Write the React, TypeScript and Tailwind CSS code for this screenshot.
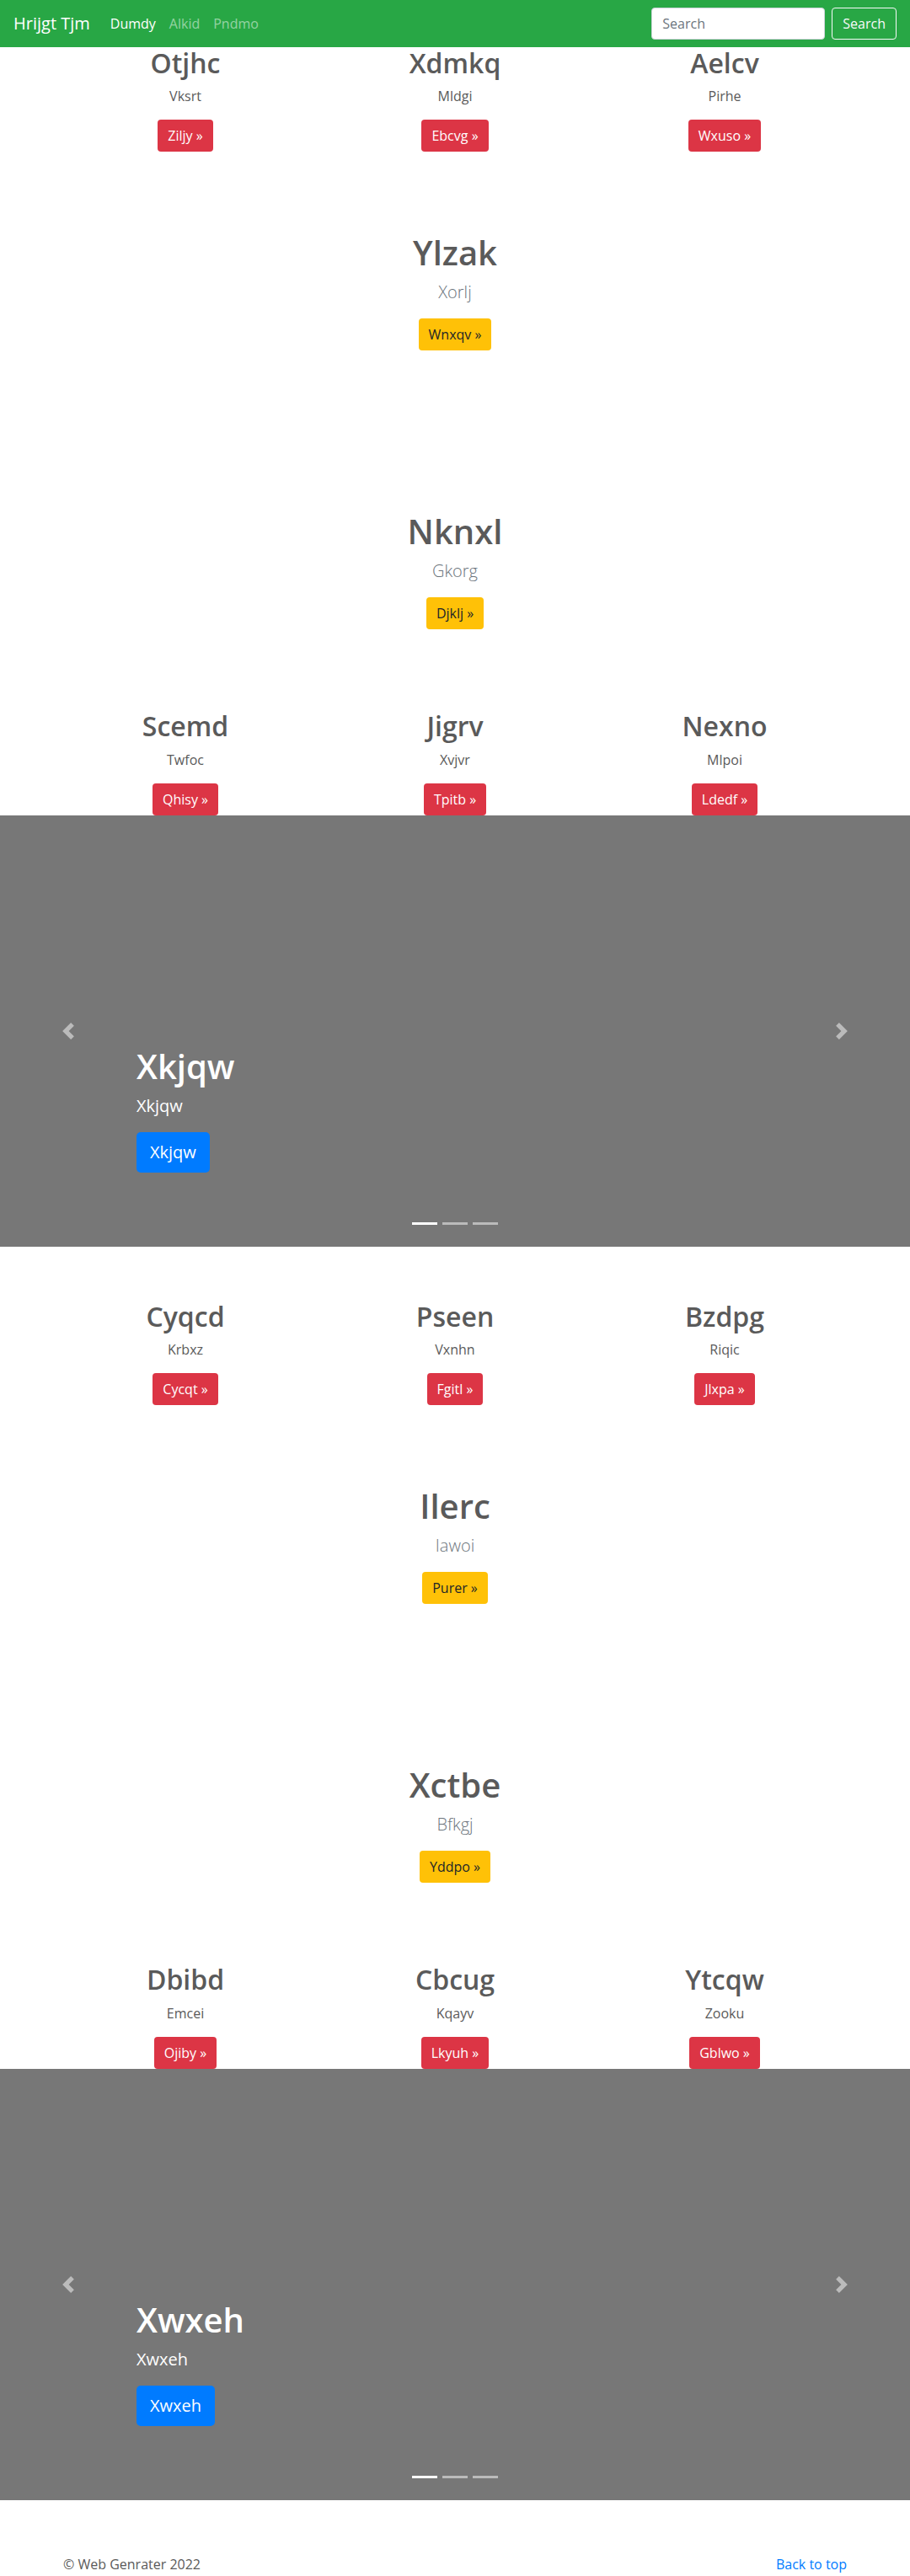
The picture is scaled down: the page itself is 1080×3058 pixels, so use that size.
import React from "react";

type Feature = { title: string; sub: string; btn: string };

const topRow: Feature[] = [
  { title: "Otjhc", sub: "Vksrt", btn: "Ziljy" },
  { title: "Xdmkq", sub: "Mldgi", btn: "Ebcvg" },
  { title: "Aelcv", sub: "Pirhe", btn: "Wxuso" },
];
const secondRow: Feature[] = [
  { title: "Scemd", sub: "Twfoc", btn: "Qhisy" },
  { title: "Jigrv", sub: "Xvjvr", btn: "Tpitb" },
  { title: "Nexno", sub: "Mlpoi", btn: "Ldedf" },
];
const thirdRow: Feature[] = [
  { title: "Cyqcd", sub: "Krbxz", btn: "Cycqt" },
  { title: "Pseen", sub: "Vxnhn", btn: "Fgitl" },
  { title: "Bzdpg", sub: "Riqic", btn: "Jlxpa" },
];
const fourthRow: Feature[] = [
  { title: "Dbibd", sub: "Emcei", btn: "Ojiby" },
  { title: "Cbcug", sub: "Kqayv", btn: "Lkyuh" },
  { title: "Ytcqw", sub: "Zooku", btn: "Gblwo" },
];

const FeatureRow = ({ items, className = "" }: { items: Feature[]; className?: string }) => (
  <div className={`mx-auto grid w-[960px] grid-cols-3 ${className}`}>
    {items.map((item) => (
      <div key={item.title} className="px-[15px] text-center">
        <h2 className="mb-2 text-[32px] font-semibold leading-[1.2]">{item.title}</h2>
        <p className="mb-4 text-base leading-6">{item.sub}</p>
        <a className="inline-block rounded bg-[#dc3545] px-3 py-[7px] text-base leading-6 text-white">
          {item.btn} »
        </a>
      </div>
    ))}
  </div>
);

const Spotlight = ({ title, sub, btn, className = "" }: Feature & { className?: string }) => (
  <div className={`text-center ${className}`}>
    <h1 className="mb-2 text-[40px] font-semibold leading-[1.2]">{title}</h1>
    <p className="mb-4 text-[20px] font-light leading-[30px] text-[#6c757d]">{sub}</p>
    <a className="inline-block rounded bg-[#ffc107] px-3 py-[7px] text-base leading-6 text-[#212529]">
      {btn} »
    </a>
  </div>
);

const Carousel = ({ label }: { label: string }) => (
  <div className="relative h-[512px] bg-[#777]">
    {/* caption */}
    <div className="flex h-full flex-col justify-end px-[15%] pb-[88px] text-white">
      <h1 className="mb-2 text-[40px] font-semibold leading-[1.2]">{label}</h1>
      <p className="mb-4 text-[20px] leading-[30px]">{label}</p>
      <div>
        <a className="inline-block rounded-[5px] bg-[#007bff] px-4 py-[9px] text-[20px] leading-[30px] text-white">
          {label}
        </a>
      </div>
    </div>

    {/* prev / next */}
    <div className="absolute left-0 top-0 flex h-full w-[15%] items-center justify-center">
      <svg width="20" height="20" viewBox="0 0 8 8" fill="#fff" opacity="0.5">
        <path d="M5.25 0l-4 4 4 4 1.5-1.5L4.25 4l2.5-2.5L5.25 0z" />
      </svg>
    </div>
    <div className="absolute right-0 top-0 flex h-full w-[15%] items-center justify-center">
      <svg width="20" height="20" viewBox="0 0 8 8" fill="#fff" opacity="0.5">
        <path d="M2.75 0l-1.5 1.5L3.75 4l-2.5 2.5L2.75 8l4-4-4-4z" />
      </svg>
    </div>

    {/* indicators */}
    <div className="absolute bottom-[26px] left-0 flex w-full justify-center gap-[6px]">
      <span className="h-[3px] w-[30px] bg-white" />
      <span className="h-[3px] w-[30px] bg-white/50" />
      <span className="h-[3px] w-[30px] bg-white/50" />
    </div>
  </div>
);

export default function App() {
  return (
    <div className="min-h-screen bg-white font-['Open_Sans','Noto_Sans',sans-serif] text-[#5a5a5a]">
      {/* Navbar */}
      <nav className="flex h-14 items-center bg-[#28a745] px-4">
        <span className="mr-4 text-[20px] leading-[30px] text-white">Hrijgt Tjm</span>
        <ul className="flex text-base leading-6">
          <li className="px-2 text-white">Dumdy</li>
          <li className="px-2 text-white/50">Alkid</li>
          <li className="px-2 text-white/50">Pndmo</li>
        </ul>
        <form className="ml-auto flex items-center">
          <input
            placeholder="Search"
            className="h-[38px] w-[206px] rounded border border-[#ced4da] bg-white px-3 text-base text-[#495057] outline-none placeholder:text-[#6c757d]"
          />
          <button type="button" className="ml-2 h-[38px] rounded border border-[#f8f9fa] px-3 text-base text-[#f8f9fa]">
            Search
          </button>
        </form>
      </nav>

      <FeatureRow items={topRow} />
      <Spotlight title="Ylzak" sub="Xorlj" btn="Wnxqv" className="mt-24" />
      <Spotlight title="Nknxl" sub="Gkorg" btn="Djklj" className="mt-[191px]" />
      <FeatureRow items={secondRow} className="mt-24" />

      <Carousel label="Xkjqw" />

      <FeatureRow items={thirdRow} className="mt-16" />
      <Spotlight title="Ilerc" sub="Iawoi" btn="Purer" className="mt-24" />
      <Spotlight title="Xctbe" sub="Bfkgj" btn="Yddpo" className="mt-[191px]" />
      <FeatureRow items={fourthRow} className="mt-24" />

      <Carousel label="Xwxeh" />

      {/* Footer */}
      <footer className="mx-auto flex w-[960px] justify-between px-[15px] pt-16 pb-4 text-base leading-6">
        <p>© Web Genrater 2022</p>
        <a className="text-[#007bff]">Back to top</a>
      </footer>
    </div>
  );
}
